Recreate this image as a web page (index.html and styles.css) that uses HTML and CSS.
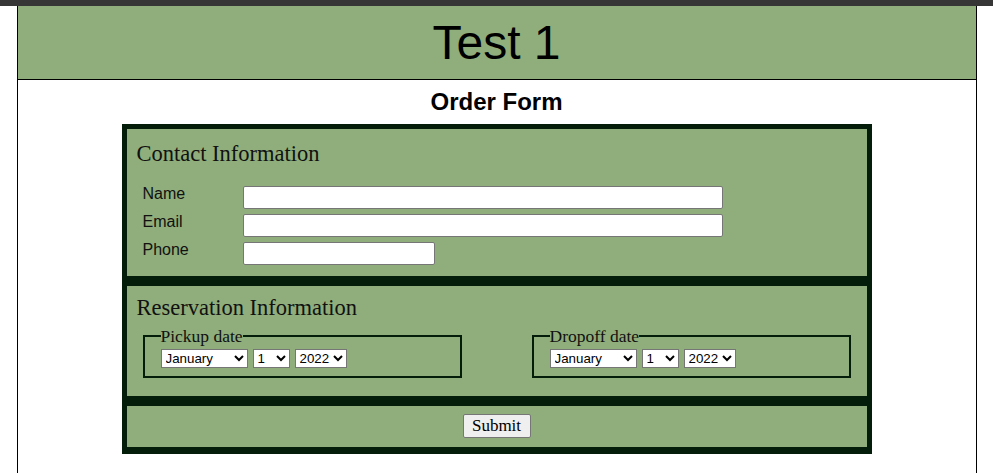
FILE: index.html
```html
<!DOCTYPE html>
<html lang="en">
<head>
<meta charset="utf-8">
<title>Test 1</title>
<link rel="stylesheet" href="styles.css">
</head>
<body>
<div class="topbar"></div>
<div class="page">
  <header class="banner"><h1 class="banner-title">Test 1</h1></header>
  <h2 class="form-title">Order Form</h2>
  <form class="order-form">
    <section class="panel panel-contact">
      <h3 class="panel-title">Contact Information</h3>
      <div class="fields">
        <label class="field-label" for="name">Name</label>
        <input class="text-input wide" id="name" type="text">
        <label class="field-label" for="email">Email</label>
        <input class="text-input wide" id="email" type="text">
        <label class="field-label" for="phone">Phone</label>
        <input class="text-input narrow" id="phone" type="text">
      </div>
    </section>
    <section class="panel panel-reserve">
      <h3 class="panel-title">Reservation Information</h3>
      <div class="dates">
        <fieldset class="date-set">
          <legend class="date-legend">Pickup date</legend>
          <div class="selects">
            <select class="sel sel-month"><option>January</option><option>February</option><option>September</option></select>
            <select class="sel sel-day"><option>1</option><option>2</option><option>31</option></select>
            <select class="sel sel-year"><option>2022</option><option>2023</option></select>
          </div>
        </fieldset>
        <fieldset class="date-set">
          <legend class="date-legend">Dropoff date</legend>
          <div class="selects">
            <select class="sel sel-month"><option>January</option><option>February</option><option>September</option></select>
            <select class="sel sel-day"><option>1</option><option>2</option><option>31</option></select>
            <select class="sel sel-year"><option>2022</option><option>2023</option></select>
          </div>
        </fieldset>
      </div>
    </section>
    <section class="panel panel-submit">
      <button class="submit-btn" type="button">Submit</button>
    </section>
  </form>
</div>
</body>
</html>
```
FILE: styles.css
```css
html, body {
  margin: 0;
  padding: 0;
  background: #ffffff;
}
body {
  font-family: "Liberation Serif", serif;
  color: #000;
  overflow: hidden;
}
.topbar {
  height: 6px;
  background: #363636;
}
.page {
  box-sizing: border-box;
  width: 960px;
  margin: 0 auto;
  min-height: calc(100vh - 6px);
  border-left: 1px solid #000;
  border-right: 1px solid #000;
}
.banner {
  background: #8fae7b;
  border-bottom: 1px solid #000;
  padding: 9px 0;
}
.banner-title {
  margin: 0;
  font-family: "Liberation Sans", Arial, sans-serif;
  font-weight: normal;
  font-size: 48px;
  line-height: 55px;
  text-align: center;
}
.form-title {
  margin: 8px 0;
  font-family: "Liberation Sans", Arial, sans-serif;
  font-size: 24px;
  line-height: 28px;
  font-weight: bold;
  text-align: center;
}
.order-form {
  width: 750px;
  margin: 0 auto;
  background: #031d0a;
  padding: 5px 5px 7px;
  box-sizing: border-box;
  display: flex;
  flex-direction: column;
  gap: 10px;
}
.panel {
  background: #8fae7b;
  padding: 0 10px;
}
.panel-title {
  margin: 0;
  font-family: "Liberation Serif", serif;
  font-weight: normal;
  font-size: 22.5px;
  line-height: 25px;
  color: #111;
}
.panel-contact {
  padding-top: 12px;
  padding-bottom: 11px;
}
.fields {
  margin-top: 20px;
  padding-left: 6px;
  display: grid;
  grid-template-columns: 100px auto;
  grid-auto-rows: 23px;
  row-gap: 5px;
  align-items: start;
  justify-items: start;
}
.field-label {
  font-family: "Liberation Sans", Arial, sans-serif;
  font-size: 16px;
  line-height: 16px;
  color: #111;
}
.text-input {
  box-sizing: border-box;
  height: 23px;
  border: 1px solid #767676;
  border-radius: 2px;
  background: #fff;
  padding: 1px 2px;
  margin: 0;
}
.wide { width: 480px; }
.narrow { width: 192px; }
.panel-reserve {
  padding-top: 9px;
  padding-bottom: 18px;
}
.dates {
  margin-top: 7px;
  padding: 0 6px;
  display: flex;
  justify-content: space-between;
}
.date-set {
  box-sizing: border-box;
  width: 319px;
  margin: 0;
  border: 2px solid #031d0a;
  padding: 4px 16px 8px;
}
.date-legend {
  padding: 0;
  font-family: "Liberation Serif", serif;
  font-size: 17.5px;
  line-height: 18px;
  color: #111;
}
.selects {
  display: flex;
  gap: 5px;
}
.sel {
  box-sizing: border-box;
  height: 19px;
  margin: 0;
  font-family: "Liberation Sans", Arial, sans-serif;
  font-size: 13.33px;
  background: #fff;
  color: #000;
  border: 1px solid #767676;
  border-radius: 0;
}
.sel-month { width: 87px; }
.sel-day { width: 37px; }
.sel-year { width: 52px; }
.panel-submit {
  padding-top: 8px;
  padding-bottom: 9px;
  display: flex;
  justify-content: center;
}
.submit-btn {
  box-sizing: border-box;
  height: 24px;
  width: 68px;
  margin: 0;
  padding: 1px 6px;
  font-family: "Liberation Serif", serif;
  font-size: 17px;
  line-height: 20px;
  color: #000;
  background: #efefef;
  border: 1px solid #767676;
  border-radius: 2px;
}
```
